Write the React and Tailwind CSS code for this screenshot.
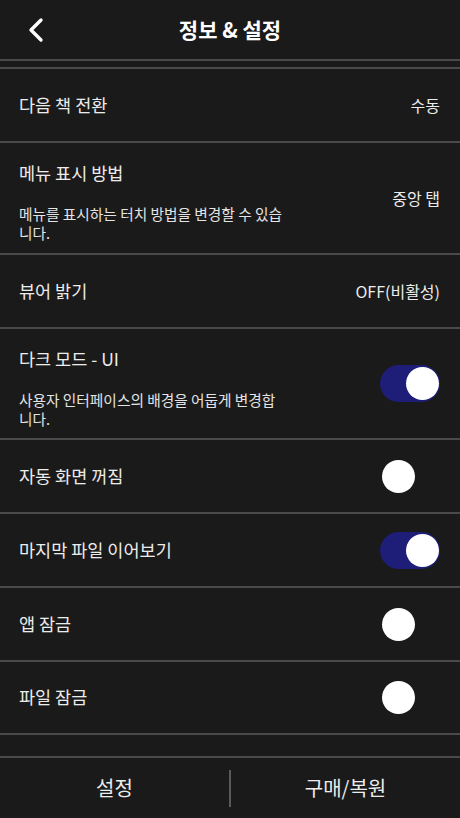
import React from "react";

const font = { fontFamily: '"Noto Sans CJK KR", "Noto Sans", sans-serif' };

function Toggle({ on }) {
  return (
    <div
      className={`relative w-[60px] h-[37px] rounded-full ${on ? "bg-[#1e1e78]" : "bg-transparent"}`}
    >
      <div
        className={`absolute top-[2px] w-[33px] h-[33px] rounded-full bg-white ${on ? "right-[1px]" : "left-[2px]"}`}
      />
    </div>
  );
}

function Divider() {
  return <div className="h-[2px] bg-[#4a4a4a]" />;
}

function Row({ title, value, toggle, h = "h-[72px]" }) {
  return (
    <>
      <div className={`${h} flex items-center justify-between pl-[19px] pr-[20px]`}>
        <span className="text-[17.5px] text-[#ececec]">{title}</span>
        {value !== undefined && <span className="text-[16px] text-[#ececec]">{value}</span>}
        {toggle !== undefined && <Toggle on={toggle} />}
      </div>
      <Divider />
    </>
  );
}

function TallRow({ title, desc1, desc2, value, toggle, h }) {
  return (
    <>
      <div className={`${h} flex items-center justify-between pl-[19px] pr-[20px]`}>
        <div className="h-full flex flex-col pt-[18px]">
          <span className="text-[17.5px] leading-[24px] text-[#ececec]">{title}</span>
          <span className="mt-[19px] text-[14.7px] leading-[19px] text-[#e4e4e4]">
            {desc1}
            <br />
            {desc2}
          </span>
        </div>
        {value !== undefined && <span className="text-[16px] text-[#ececec]">{value}</span>}
        {toggle !== undefined && <Toggle on={toggle} />}
      </div>
      <Divider />
    </>
  );
}

export default function App() {
  return (
    <div className="w-[460px] h-[818px] bg-[#1a1a1a] flex flex-col overflow-hidden" style={font}>
      <div className="h-[59px] relative flex items-center justify-center">
        <svg className="absolute left-[27px] top-[17px]" width="18" height="26" viewBox="0 0 18 26">
          <path d="M14 3 L4 13 L14 23" fill="none" stroke="#ffffff" strokeWidth="3.4" strokeLinecap="round" strokeLinejoin="round" />
        </svg>
        <span className="text-[21px] font-bold text-white">정보 &amp; 설정</span>
      </div>
      <Divider />
      <div className="h-[6px]" />
      <Divider />
      <Row title="다음 책 전환" value="수동" />
      <TallRow
        h="h-[110px]"
        title="메뉴 표시 방법"
        desc1="메뉴를 표시하는 터치 방법을 변경할 수 있습"
        desc2="니다."
        value="중앙 탭"
      />
      <Row title="뷰어 밝기" value="OFF(비활성)" />
      <TallRow
        h="h-[109px]"
        title="다크 모드 - UI"
        desc1="사용자 인터페이스의 배경을 어둡게 변경합"
        desc2="니다."
        toggle={true}
      />
      <Row title="자동 화면 꺼짐" toggle={false} />
      <Row title="마지막 파일 이어보기" toggle={true} />
      <Row title="앱 잠금" toggle={false} />
      <Row title="파일 잠금" toggle={false} h="h-[71px]" />
      <div className="flex-1" />
      <Divider />
      <div className="h-[60px] flex items-center">
        <div className="flex-1 flex justify-center">
          <span className="text-[20px] text-[#ececec]">설정</span>
        </div>
        <div className="w-[2px] h-[37px] bg-[#5a5a5a]" />
        <div className="flex-1 flex justify-center">
          <span className="text-[20px] text-[#ececec]">구매/복원</span>
        </div>
      </div>
    </div>
  );
}
